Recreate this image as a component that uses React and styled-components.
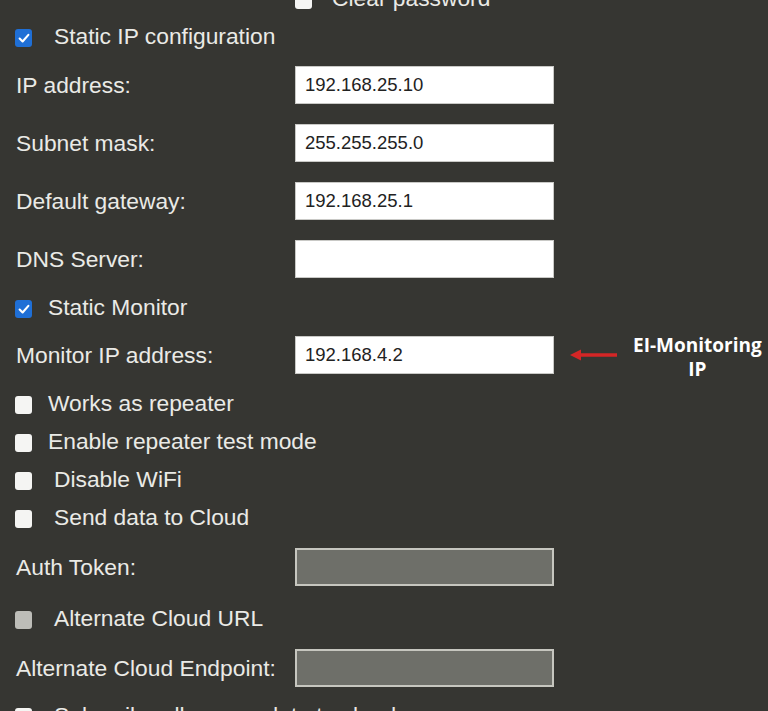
import React from "react";
import styled, { createGlobalStyle } from "styled-components";

const GlobalStyle = createGlobalStyle`
  html, body {
    margin: 0;
    height: 100%;
    overflow: hidden;
    background: #363632;
  }
  body {
    font-family: "Liberation Sans", Arial, sans-serif;
    color: #eaeae6;
  }
`;

const Page = styled.div`
  height: 711px;
  overflow: hidden;
`;

const Form = styled.form`
  display: flex;
  flex-direction: column;
  margin-top: -20px;
  padding-left: 16px;
`;

const CheckRow = styled.div`
  display: flex;
  align-items: center;
  height: ${(p) => p.$h || 38}px;
  padding-left: ${(p) => p.$indent || 0}px;
  font-size: 22.8px;
  white-space: nowrap;
`;

const Box = styled.span`
  display: inline-flex;
  align-items: center;
  justify-content: center;
  box-sizing: border-box;
  width: 17px;
  height: 18px;
  margin-left: -1px;
  margin-top: 4px;
  border-radius: 3px;
  flex-shrink: 0;
  background: ${(p) =>
    p.$state === "checked" ? "#1f6fd6" : p.$state === "disabled" ? "#bdbdb8" : "#f5f5f3"};

  svg {
    width: 14px;
    height: 14px;
  }
`;

const CheckText = styled.span`
  margin-left: ${(p) => p.$gap}px;
`;

const FieldRow = styled.div`
  display: flex;
  align-items: center;
  height: ${(p) => p.$h || 58}px;
  font-size: 22.8px;
  white-space: nowrap;
`;

const Label = styled.label`
  width: 279px;
  flex-shrink: 0;
`;

const Input = styled.input`
  box-sizing: border-box;
  width: 259px;
  height: 38px;
  margin: 0;
  padding: 0 9px;
  border: ${(p) => (p.$muted ? "2px solid #c6c6bf" : "1px solid #c9c9c6")};
  background: ${(p) => (p.$muted ? "#6e6f69" : "#ffffff")};
  color: #222;
  font-family: "Liberation Sans", Arial, sans-serif;
  font-size: 18.5px;
  outline: none;
`;

const Note = styled.div`
  display: flex;
  align-items: center;
  margin-left: 16px;
`;

const NoteText = styled.div`
  margin-left: 15px;
  font-family: "Open Sans", "DejaVu Sans", sans-serif;
  font-weight: 700;
  font-size: 19px;
  line-height: 24px;
  text-align: center;
  color: #ffffff;
  margin-top: 4px;
`;

const Check = ({ state = "off", gap = 22, children }) => (
  <>
    <Box $state={state}>
      {state === "checked" && (
        <svg viewBox="0 0 16 16" fill="none">
          <path
            d="M3 8.6 L6.4 12 L13 4.4"
            stroke="#fff"
            strokeWidth="2.4"
            strokeLinecap="round"
            strokeLinejoin="round"
          />
        </svg>
      )}
    </Box>
    <CheckText $gap={gap}>{children}</CheckText>
  </>
);

const Arrow = () => (
  <svg width="48" height="14" viewBox="0 0 48 14">
    <line x1="9" y1="7" x2="47" y2="7" stroke="#d42626" strokeWidth="3.5" />
    <polygon points="0,7 11,1.5 11,12.5" fill="#d42626" />
  </svg>
);

const App = () => {
  return (
    <Page>
      <GlobalStyle />
      <Form>
        <CheckRow $h={36} $indent={280}>
          <Check gap={20}>Clear password</Check>
        </CheckRow>
        <CheckRow $h={40}>
          <Check state="checked" gap={22}>
            Static IP configuration
          </Check>
        </CheckRow>
        <FieldRow>
          <Label>IP address:</Label>
          <Input readOnly defaultValue="192.168.25.10" />
        </FieldRow>
        <FieldRow>
          <Label>Subnet mask:</Label>
          <Input readOnly defaultValue="255.255.255.0" />
        </FieldRow>
        <FieldRow>
          <Label>Default gateway:</Label>
          <Input readOnly defaultValue="192.168.25.1" />
        </FieldRow>
        <FieldRow>
          <Label>DNS Server:</Label>
          <Input readOnly defaultValue="" />
        </FieldRow>
        <CheckRow>
          <Check state="checked" gap={16}>
            Static Monitor
          </Check>
        </CheckRow>
        <FieldRow>
          <Label>Monitor IP address:</Label>
          <Input readOnly defaultValue="192.168.4.2" />
          <Note>
            <Arrow />
            <NoteText>
              EI-Monitoring
              <br />
              IP
            </NoteText>
          </Note>
        </FieldRow>
        <CheckRow>
          <Check gap={16}>Works as repeater</Check>
        </CheckRow>
        <CheckRow>
          <Check gap={16}>Enable repeater test mode</Check>
        </CheckRow>
        <CheckRow>
          <Check gap={22}>Disable WiFi</Check>
        </CheckRow>
        <CheckRow>
          <Check gap={22}>Send data to Cloud</Check>
        </CheckRow>
        <FieldRow $h={62}>
          <Label>Auth Token:</Label>
          <Input $muted readOnly defaultValue="" />
        </FieldRow>
        <CheckRow $h={40}>
          <Check state="disabled" gap={22}>
            Alternate Cloud URL
          </Check>
        </CheckRow>
        <FieldRow $h={60}>
          <Label>Alternate Cloud Endpoint:</Label>
          <Input $muted readOnly defaultValue="" />
        </FieldRow>
        <CheckRow $h={34}>
          <Check gap={22}>Subscribe all sensor data to cloud</Check>
        </CheckRow>
      </Form>
    </Page>
  );
};

export default App;
